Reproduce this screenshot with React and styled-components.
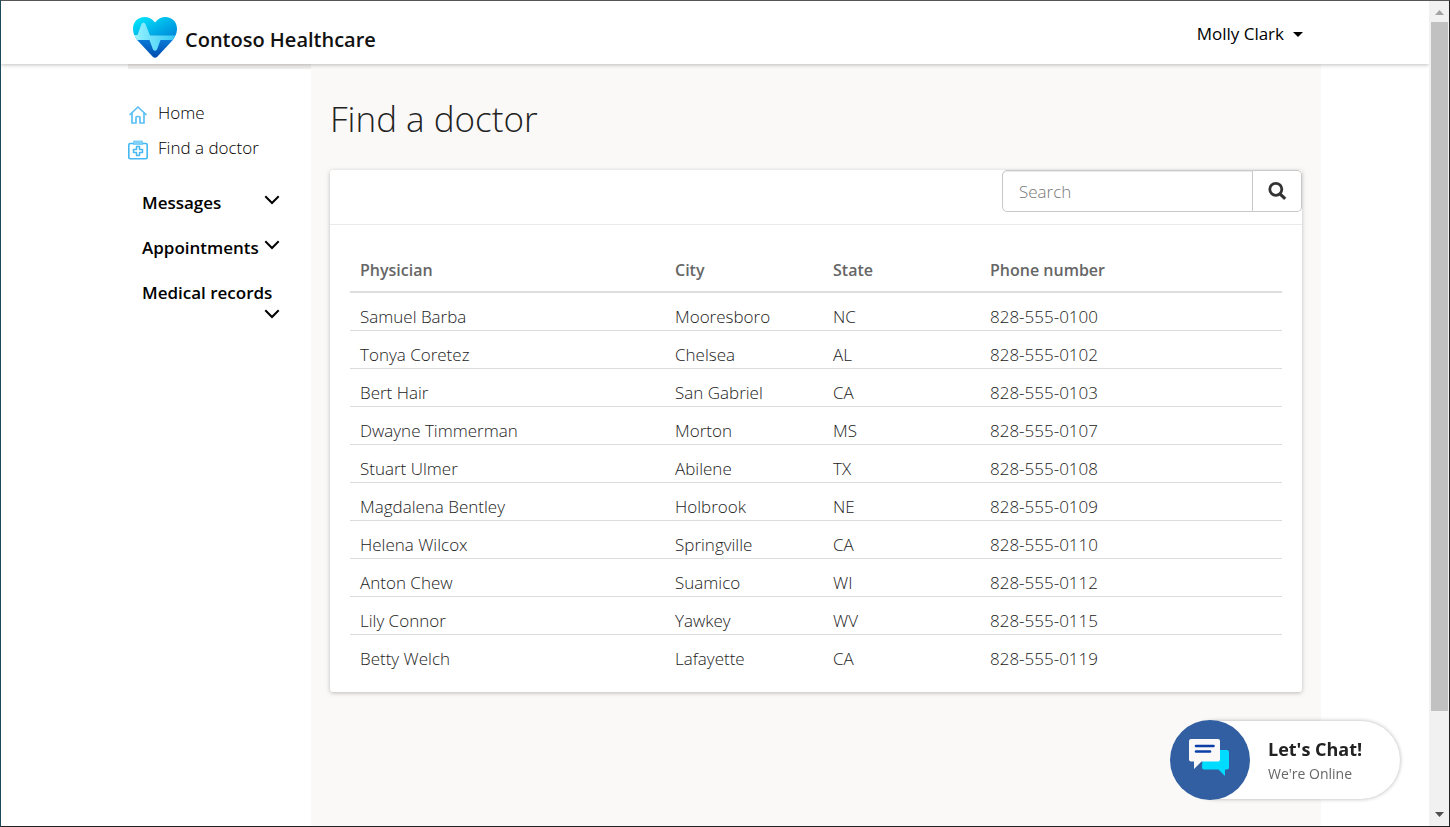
import styled, { createGlobalStyle } from "styled-components";

const GlobalStyle = createGlobalStyle`
  * {
    box-sizing: border-box;
  }
  body {
    margin: 0;
    background: #fff;
    color: #222;
    font-family: "Open Sans", "Noto Sans", sans-serif;
    font-size: 17px;
    font-weight: 400;
  }
  button, input {
    font: inherit;
  }
`

const Window = styled.div`
  border: 1px solid #222;
  border-left-color: #1b4a5a;
  border-top-color: #555;
  display: flex;
  min-height: 100vh;
`

const Page = styled.div`
  display: flex;
  flex: 1;
  flex-direction: column;
  min-width: 0;
`

const Header = styled.header`
  align-items: flex-start;
  background: #fff;
  box-shadow: 0 1px 4px rgba(0,0,0,.25);
  clip-path: inset(0 0 -8px 0);
  display: flex;
  height: 63px;
  justify-content: space-between;
  padding: 15px 126px 0 131px;
  position: relative;
`

const Brand = styled.a`
  align-items: flex-start;
  color: #111;
  display: flex;
  font-size: 20px;
  font-weight: 600;
  gap: 7px;
  line-height: 48px;
  text-decoration: none;
`

const UserButton = styled.button`
  align-items: center;
  background: none;
  border: 0;
  color: #000;
  cursor: pointer;
  display: flex;
  font-size: 17px;
  gap: 9px;
  line-height: 24px;
  margin-top: 6px;
  padding: 0;
`

const Columns = styled.div`
  display: flex;
  flex: 1;
  padding: 0 108px 0 127px;
`

const Sidebar = styled.aside`
  border-top: 5px solid #f0eeec;
  flex: 0 0 183px;
  padding-top: 26px;
`

const NavLink = styled.a`
  align-items: center;
  color: #000;
  display: flex;
  font-size: 17px;
  font-weight: 300;
  gap: 10px;
  height: 35px;
  text-decoration: none;
  svg {
    margin-top: 4px;
  }
`

const Groups = styled.div`
  display: flex;
  flex-direction: column;
  gap: 21px;
  padding: 26px 31px 0 14px;
`

const GroupButton = styled.button`
  background: none;
  border: 0;
  color: #000;
  cursor: pointer;
  display: flex;
  flex-wrap: wrap;
  font-size: 17px;
  font-weight: 600;
  justify-content: space-between;
  line-height: 24px;
  padding: 0;
  text-align: left;
  white-space: nowrap;
  svg {
    margin: 3px 0 0 auto;
  }
`

const Main = styled.main`
  background: #faf9f8;
  flex: 1;
  min-width: 0;
  padding: 31px 19px 0;
`

const Title = styled.h1`
  font-size: 35px;
  font-weight: 300;
  line-height: 48px;
  margin: 0 0 27px;
`

const Card = styled.section`
  background: #fff;
  border-radius: 3px;
  box-shadow: 0 1px 4px rgba(0,0,0,.25);
`

const CardHeader = styled.div`
  border-bottom: 1px solid #eaeaea;
  display: flex;
  height: 55px;
  justify-content: flex-end;
`

const Search = styled.form`
  display: flex;
  height: 42px;
  width: 300px;
`

const SearchInput = styled.input`
  border: 1px solid #c8c8c8;
  border-radius: 5px 0 0 5px;
  box-shadow: inset 0 1px 1px rgba(0,0,0,.08);
  flex: 1;
  font-weight: 300;
  min-width: 0;
  padding: 0 16px;
  &::placeholder {
    color: #777;
    opacity: 1;
  }
`

const SearchButton = styled.button`
  align-items: center;
  background: #fff;
  border: 1px solid #c8c8c8;
  border-left: 0;
  border-radius: 0 5px 5px 0;
  cursor: pointer;
  display: flex;
  justify-content: center;
  padding: 0;
  width: 49px;
`

const CardBody = styled.div`
  padding: 20px 20px 19px;
`

const Table = styled.table`
  border-collapse: separate;
  border-spacing: 0;
  table-layout: fixed;
  width: 100%;
`

const HeadCell = styled.th`
  border-bottom: 2px solid #ddd;
  color: #666;
  font-size: 16px;
  font-weight: 600;
  line-height: 28px;
  padding: 11px 10px 7px;
  text-align: left;
  width: ${props => props.$width};
`

const Cell = styled.td`
  border-bottom: 1px solid #ddd;
  font-size: 17px;
  font-weight: 300;
  line-height: 27px;
  padding: 10px 10px 0;
  tr:last-child & {
    border-bottom-color: transparent;
  }
`

const Chat = styled.button`
  align-items: center;
  background: none;
  border: 0;
  bottom: 27px;
  cursor: pointer;
  display: flex;
  padding: 0;
  position: fixed;
  right: 50px;
  text-align: left;
`

const ChatCircle = styled.span`
  align-items: center;
  background: #315fa2;
  border-radius: 50%;
  display: flex;
  height: 80px;
  justify-content: center;
  padding: 0 2px 6px 0;
  position: relative;
  width: 80px;
  z-index: 1;
`

const ChatPill = styled.span`
  background: #fff;
  border-radius: 39px;
  box-shadow: 0 0 4px rgba(0,0,0,.3);
  display: flex;
  flex-direction: column;
  height: 78px;
  justify-content: center;
  margin-left: -72px;
  padding: 2px 0 0 90px;
  width: 222px;
`

const ChatTitle = styled.span`
  color: #222;
  font-size: 18px;
  font-weight: 700;
  line-height: 26px;
`

const ChatStatus = styled.span`
  color: #666;
  font-size: 14px;
  line-height: 24px;
`

const Scrollbar = styled.div`
  align-items: center;
  background: #f1f1f1;
  display: flex;
  flex: 0 0 20px;
  flex-direction: column;
  padding: 9px 1px 9px 2px;
`

const Track = styled.div`
  align-self: stretch;
  flex: 1;
  margin: 7px 0;
`

const Thumb = styled.div`
  background: #c1c1c1;
  height: 88%;
`

const doctors = [
  ["Samuel Barba", "Mooresboro", "NC", "828-555-0100"],
  ["Tonya Coretez", "Chelsea", "AL", "828-555-0102"],
  ["Bert Hair", "San Gabriel", "CA", "828-555-0103"],
  ["Dwayne Timmerman", "Morton", "MS", "828-555-0107"],
  ["Stuart Ulmer", "Abilene", "TX", "828-555-0108"],
  ["Magdalena Bentley", "Holbrook", "NE", "828-555-0109"],
  ["Helena Wilcox", "Springville", "CA", "828-555-0110"],
  ["Anton Chew", "Suamico", "WI", "828-555-0112"],
  ["Lily Connor", "Yawkey", "WV", "828-555-0115"],
  ["Betty Welch", "Lafayette", "CA", "828-555-0119"],
]

const groups = ["Messages", "Appointments", "Medical records"]

function HeartLogo () {
  return (
    <svg width="46" height="44" viewBox="0 0 46 44" aria-hidden="true">
      <defs>
        <linearGradient id="heartTop" x1="0" y1="0" x2="1" y2="1">
          <stop offset="0" stopColor="#00f0ff" />
          <stop offset="1" stopColor="#0078d4" />
        </linearGradient>
        <linearGradient id="heartBottom" x1="0" y1="0" x2="0" y2="1">
          <stop offset="0" stopColor="#0a7bd8" />
          <stop offset="1" stopColor="#0046a8" />
        </linearGradient>
        <linearGradient id="heartPulse" x1="0" y1="0" x2="1" y2="0">
          <stop offset="0" stopColor="#9df6ff" />
          <stop offset="1" stopColor="#2cc3f4" />
        </linearGradient>
        <clipPath id="heartShape">
          <path d="M23 6.500C20 2.500 16.500 1 12.500 1C6 1 1 6 1 12.800C1 18 3.500 22 7 26L20.500 40.500C22 42.200 24 42.200 25.500 40.500L39 26C42.500 22 45 18 45 12.800C45 6 40 1 33.500 1C29.500 1 26 2.500 23 6.500Z" />
        </clipPath>
      </defs>
      <g clipPath="url(#heartShape)">
        <rect width="46" height="25" fill="url(#heartTop)" />
        <rect y="23" width="46" height="21" fill="url(#heartBottom)" />
        <path d="M0 19H5.500L9.500 8Q11.500 5 13.500 8L18 19.500H46V24H28.500L25 33.500Q23 36 21 33.500L17.500 24H0Z" fill="url(#heartPulse)" />
      </g>
    </svg>
  )
}

function HomeIcon () {
  return (
    <svg width="20" height="20" viewBox="0 0 20 20" fill="none" stroke="#5bc0f5" strokeWidth="1.700" strokeLinejoin="round" strokeLinecap="round" aria-hidden="true">
      <path d="M2 9.500L10 2L18 9.500" />
      <path d="M4 8V18H8V12.500Q8 11.500 9 11.500H11Q12 11.500 12 12.500V18H16V8" />
    </svg>
  )
}

function DoctorIcon () {
  return (
    <svg width="20" height="20" viewBox="0 0 20 20" fill="none" aria-hidden="true">
      <path d="M5 5V1.500Q5 0.500 6 0.500H14Q15 0.500 15 1.500V5Z" fill="#7fd0f8" />
      <path d="M5.500 3.500H2.300Q0.800 3.500 0.800 5V17.200Q0.800 18.700 2.300 18.700H17.700Q19.200 18.700 19.200 17.200V5Q19.200 3.500 17.700 3.500H14.500" stroke="#45b7f2" strokeWidth="1.600" />
      <path d="M8.500 6.500H11.500V9.500H14.500V12.500H11.500V15.500H8.500V12.500H5.500V9.500H8.500Z" stroke="#45b7f2" strokeWidth="1.500" strokeLinejoin="round" />
    </svg>
  )
}

function Chevron () {
  return (
    <svg width="16" height="12" viewBox="0 0 16 12" fill="none" stroke="#000" strokeWidth="2" aria-hidden="true">
      <path d="M1.300 2.300L8 9L14.700 2.300" />
    </svg>
  )
}

function SearchIcon () {
  return (
    <svg width="20" height="20" viewBox="0 0 20 20" fill="none" stroke="#333" aria-hidden="true">
      <circle cx="8.800" cy="8.300" r="6" strokeWidth="2.800" />
      <path d="M13 12.800L18.200 17.800" strokeWidth="3.200" />
    </svg>
  )
}

function ChatIcon () {
  return (
    <svg width="42" height="40" viewBox="0 0 42 40" aria-hidden="true">
      <path d="M15 13H39Q41 13 41 15V30.500Q41 32.500 39 32.500H37V39L30.500 32.500H16Q14 32.500 14 30.500Z" fill="#00dcff" />
      <path d="M3 2H30Q32 2 32 4V22.500Q32 24.500 30 24.500H13.500L6 32V24.500H3Q1 24.500 1 22.500V4Q1 2 3 2Z" fill="#faf9f8" />
      <path d="M8 9H25.500M8 14.500H22" stroke="#0a3fa8" strokeWidth="2.600" strokeLinecap="round" />
    </svg>
  )
}

function App () {
  return (
    <>
      <GlobalStyle />
      <Window>
        <Page>
          <Header>
            <Brand href="#">
              <HeartLogo />
              Contoso Healthcare
            </Brand>
            <UserButton type="button">
              Molly Clark
              <svg width="10" height="5" viewBox="0 0 10 5" aria-hidden="true">
                <path d="M0 0H10L5 5Z" />
              </svg>
            </UserButton>
          </Header>
          <Columns>
            <Sidebar>
              <nav>
                <NavLink href="#"><HomeIcon />Home</NavLink>
                <NavLink href="#"><DoctorIcon />Find a doctor</NavLink>
              </nav>
              <Groups>
                {groups.map(name => (
                  <GroupButton type="button" key={name}>
                    {name}
                    <Chevron />
                  </GroupButton>
                ))}
              </Groups>
            </Sidebar>
            <Main>
              <Title>Find a doctor</Title>
              <Card>
                <CardHeader>
                  <Search role="search">
                    <SearchInput type="text" placeholder="Search" aria-label="Search" />
                    <SearchButton type="button" aria-label="Submit search">
                      <SearchIcon />
                    </SearchButton>
                  </Search>
                </CardHeader>
                <CardBody>
                  <Table>
                    <thead>
                      <tr>
                        <HeadCell $width="315px">Physician</HeadCell>
                        <HeadCell $width="158px">City</HeadCell>
                        <HeadCell $width="157px">State</HeadCell>
                        <HeadCell>Phone number</HeadCell>
                      </tr>
                    </thead>
                    <tbody>
                      {doctors.map(row => (
                        <tr key={row[0]}>
                          {row.map(value => <Cell key={value}>{value}</Cell>)}
                        </tr>
                      ))}
                    </tbody>
                  </Table>
                </CardBody>
              </Card>
            </Main>
          </Columns>
        </Page>
        <Scrollbar aria-hidden="true">
          <svg width="9" height="5" viewBox="0 0 9 5"><path d="M0 5H9L4.500 0Z" fill="#a3a3a3" /></svg>
          <Track>
            <Thumb />
          </Track>
          <svg width="9" height="5" viewBox="0 0 9 5"><path d="M0 0H9L4.500 5Z" fill="#505050" /></svg>
        </Scrollbar>
      </Window>
      <Chat type="button">
        <ChatCircle>
          <ChatIcon />
        </ChatCircle>
        <ChatPill>
          <ChatTitle>Let's Chat!</ChatTitle>
          <ChatStatus>We're Online</ChatStatus>
        </ChatPill>
      </Chat>
    </>
  )
}

export default App
